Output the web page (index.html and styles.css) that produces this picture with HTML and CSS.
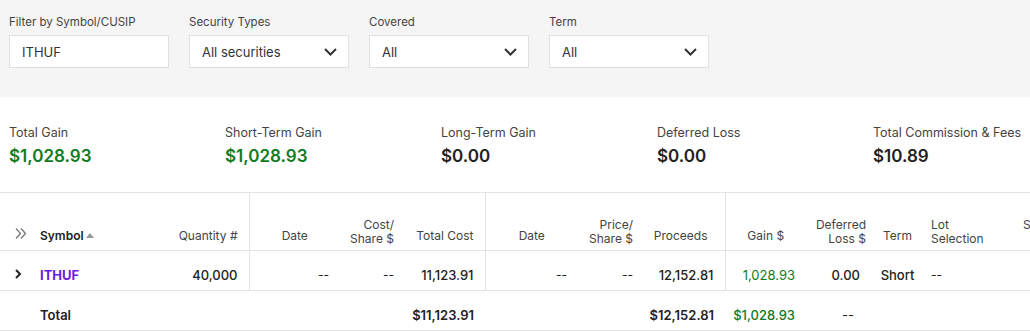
FILE: index.html
```html
<!DOCTYPE html>
<html lang="en">
<head>
  <meta charset="UTF-8">
  <title>Gains &amp; Losses</title>
  <link rel="stylesheet" href="styles.css">
</head>
<body>
  <div class="filters">
    <div class="field">
      <label>Filter by Symbol/CUSIP</label>
      <div class="box">ITHUF</div>
    </div>
    <div class="field">
      <label>Security Types</label>
      <div class="box select">All securities
        <svg width="13" height="8" viewBox="0 0 13 8"><polyline points="1,1 6.5,6.5 12,1" fill="none" stroke="#333" stroke-width="2"/></svg>
      </div>
    </div>
    <div class="field">
      <label>Covered</label>
      <div class="box select">All
        <svg width="13" height="8" viewBox="0 0 13 8"><polyline points="1,1 6.5,6.5 12,1" fill="none" stroke="#333" stroke-width="2"/></svg>
      </div>
    </div>
    <div class="field">
      <label>Term</label>
      <div class="box select">All
        <svg width="13" height="8" viewBox="0 0 13 8"><polyline points="1,1 6.5,6.5 12,1" fill="none" stroke="#333" stroke-width="2"/></svg>
      </div>
    </div>
  </div>

  <div class="summary">
    <div class="stat">
      <div class="stat-label">Total Gain</div>
      <div class="stat-value gain">$1,028.93</div>
    </div>
    <div class="stat">
      <div class="stat-label">Short-Term Gain</div>
      <div class="stat-value gain">$1,028.93</div>
    </div>
    <div class="stat">
      <div class="stat-label">Long-Term Gain</div>
      <div class="stat-value">$0.00</div>
    </div>
    <div class="stat">
      <div class="stat-label">Deferred Loss</div>
      <div class="stat-value">$0.00</div>
    </div>
    <div class="stat">
      <div class="stat-label">Total Commission &amp; Fees</div>
      <div class="stat-value">$10.89</div>
    </div>
  </div>

  <div class="table-wrap">
    <table class="lots">
      <colgroup>
        <col style="width:30px"><col style="width:120px"><col style="width:99px">
        <col style="width:91px"><col style="width:65px"><col style="width:80px">
        <col style="width:93px"><col style="width:66px"><col style="width:81px">
        <col style="width:81px"><col style="width:65px"><col style="width:53px">
        <col style="width:91px"><col style="width:100px">
      </colgroup>
      <thead>
        <tr>
          <th class="expand">
            <svg width="12" height="11" viewBox="0 0 12 11"><polyline points="1,0.5 5.5,5.5 1,10.5" fill="none" stroke="#777" stroke-width="1.3"/><polyline points="6,0.5 10.5,5.5 6,10.5" fill="none" stroke="#777" stroke-width="1.3"/></svg>
          </th>
          <th class="left sym">Symbol<span class="sort"></span></th>
          <th class="right">Quantity #</th>
          <th class="center sep">Date</th>
          <th class="right two">Cost/<br>Share $</th>
          <th class="right">Total Cost</th>
          <th class="center sep">Date</th>
          <th class="right two">Price/<br>Share $</th>
          <th class="right pad-proc">Proceeds</th>
          <th class="center sep">Gain $</th>
          <th class="right two tight">Deferred<br>Loss $</th>
          <th class="center">Term</th>
          <th class="left two">Lot<br>Selection</th>
          <th class="left upper">Status</th>
        </tr>
      </thead>
      <tbody>
        <tr class="row">
          <td class="expand">
            <svg width="7" height="10" viewBox="0 0 7 10"><polyline points="1,1 5,5 1,9" fill="none" stroke="#222" stroke-width="2"/></svg>
          </td>
          <td class="left"><a class="symbol">ITHUF</a></td>
          <td class="right num">40,000</td>
          <td class="right sep">--</td>
          <td class="right">--</td>
          <td class="right num">11,123.91</td>
          <td class="right sep">--</td>
          <td class="right">--</td>
          <td class="right num">12,152.81</td>
          <td class="right sep gain">1,028.93</td>
          <td class="right num">0.00</td>
          <td class="center num">Short</td>
          <td class="left">--</td>
          <td></td>
        </tr>
        <tr class="total">
          <td></td>
          <td class="left">Total</td>
          <td></td>
          <td></td>
          <td></td>
          <td class="right">$11,123.91</td>
          <td></td>
          <td></td>
          <td class="right">$12,152.81</td>
          <td class="right gain">$1,028.93</td>
          <td class="right dash">--</td>
          <td></td>
          <td></td>
          <td></td>
        </tr>
      </tbody>
    </table>
  </div>
</body>
</html>
```

FILE: styles.css
```css
body {
  margin: 0;
  font-family: Inter, Roboto, "Liberation Sans", Arial, sans-serif;
  color: #222;
  background: #fff;
  overflow: hidden;
}

.filters {
  display: flex;
  gap: 20px;
  height: 97px;
  box-sizing: border-box;
  padding: 15px 9px 0;
  background: #f5f5f5;
}

.field {
  width: 160px;
}

.field label {
  display: block;
  font-size: 11.5px;
  line-height: 14px;
  color: #444;
  margin-bottom: 6px;
}

.box {
  height: 33px;
  box-sizing: border-box;
  border: 1px solid #e0e0e0;
  background: #fff;
  padding: 0 12px;
  font-size: 13px;
  line-height: 32px;
  color: #333;
}

.select {
  display: flex;
  justify-content: space-between;
  align-items: center;
  padding-right: 11px;
}

.summary {
  display: flex;
  padding: 28px 9px 0;
  height: 95px;
  box-sizing: border-box;
}

.stat {
  flex: none;
  width: 216px;
}

.stat-label {
  font-size: 12.5px;
  line-height: 16px;
  color: #444;
}

.stat-value {
  margin-top: 4px;
  font-size: 17px;
  line-height: 22px;
  font-weight: 600;
  color: #222;
}

.gain {
  color: #0f7b22;
}

.table-wrap {
  width: 1030px;
  overflow: hidden;
}

.lots {
  table-layout: fixed;
  border-collapse: collapse;
  width: 1115px;
  font-size: 12px;
  border-top: 1px solid #e3e3e3;
}

.lots th, .lots td {
  box-sizing: border-box;
  white-space: nowrap;
  border-bottom: 1px solid #e3e3e3;
}

.lots th {
  height: 58px;
  padding: 0 11px 7px 5px;
  line-height: 14px;
  font-weight: 400;
  color: #444;
  vertical-align: bottom;
}

.lots th.two {
  padding-bottom: 4px;
}

.lots th.upper {
  padding-bottom: 18px;
}

.lots th.tight {
  padding-right: 5px;
}

.lots th.pad-proc {
  padding-right: 17px;
}

.lots td {
  height: 40px;
  padding: 8px 11px 0 5px;
}

.left {
  text-align: left;
}

.right {
  text-align: right;
}

.center {
  text-align: center;
}

.lots .center {
  padding-left: 0;
  padding-right: 0;
}

.lots th.left, .lots td.left {
  padding-left: 10px;
}

.lots th:nth-child(13), .lots td:nth-child(13) {
  padding-left: 7px;
}

.lots th:last-child {
  padding-left: 8px;
}

.sep {
  border-left: 1px solid #e3e3e3;
}

.expand {
  text-align: right;
}

.lots th.expand {
  padding: 0 3px 8px 0;
}

.lots td.expand {
  padding: 8px 8px 0 0;
}

.sym {
  font-weight: 600 !important;
  color: #222 !important;
}

.sort {
  display: inline-block;
  margin-left: 2px;
  width: 0;
  height: 0;
  border-left: 4px solid transparent;
  border-right: 4px solid transparent;
  border-bottom: 5px solid #999;
  vertical-align: 2px;
}

.symbol {
  color: #6a20d6;
  font-weight: 700;
  font-size: 13px;
}

.num {
  font-weight: 500;
  font-size: 13px;
}

.lots td.gain {
  font-size: 13px;
}

.total td {
  font-weight: 600;
  font-size: 13px;
}

.total td.gain {
  font-weight: 500;
}

.total td.dash {
  font-weight: 400;
  padding-right: 17px;
}
```
